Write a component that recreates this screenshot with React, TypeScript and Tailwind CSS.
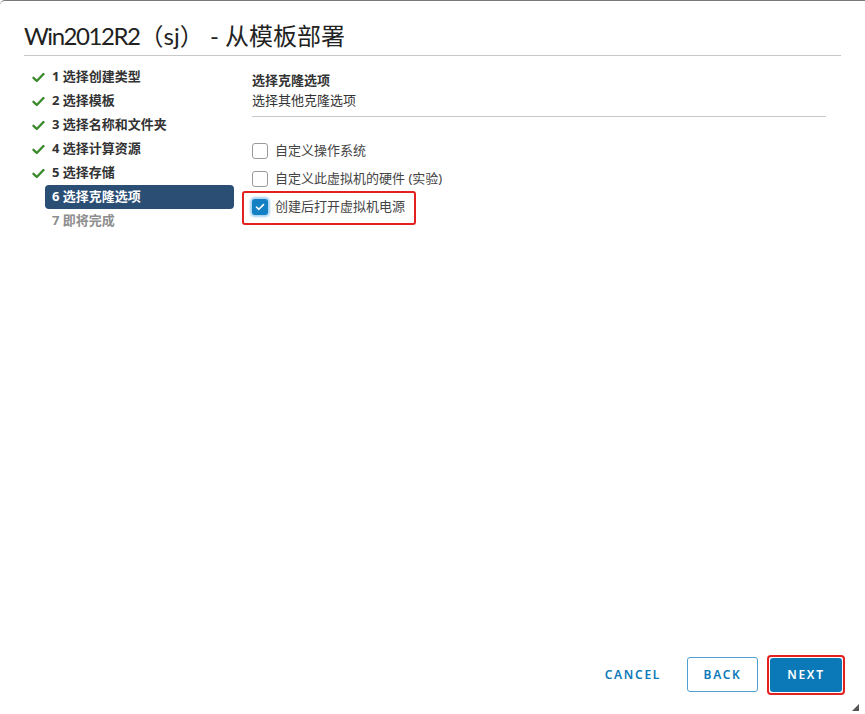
import React, { useState } from 'react';

const FONT = '"Noto Sans", "Noto Sans CJK SC", sans-serif';

const steps = [
  { n: 1, label: '选择创建类型', state: 'done' },
  { n: 2, label: '选择模板', state: 'done' },
  { n: 3, label: '选择名称和文件夹', state: 'done' },
  { n: 4, label: '选择计算资源', state: 'done' },
  { n: 5, label: '选择存储', state: 'done' },
  { n: 6, label: '选择克隆选项', state: 'active' },
  { n: 7, label: '即将完成', state: 'todo' },
];

function GreenCheck() {
  return (
    <svg width="13" height="11" viewBox="0 0 13 11">
      <path d="M1.5 5.8 L4.8 9 L11.5 2" fill="none" stroke="#3d8b2f" strokeWidth="2.4" strokeLinecap="round" strokeLinejoin="round" />
    </svg>
  );
}

function Box({ checked, onClick }: { checked: boolean; onClick: () => void }) {
  return (
    <button
      onClick={onClick}
      className={`w-4 h-4 rounded-[3px] flex items-center justify-center shrink-0 ${checked ? 'bg-[#1380c4] shadow-[0_0_2px_2px_rgba(96,175,232,0.55)]' : 'border border-[#9a9a9a] bg-white'}`}
    >
      {checked && (
        <svg width="10" height="8" viewBox="0 0 10 8">
          <path d="M1.5 4.2 L3.9 6.3 L8.5 1.6" fill="none" stroke="#fff" strokeWidth="1.6" strokeLinecap="round" strokeLinejoin="round" />
        </svg>
      )}
    </button>
  );
}

export default function App() {
  const [opts, setOpts] = useState([false, false, true]);
  const labels = ['自定义操作系统', '自定义此虚拟机的硬件 (实验)', '创建后打开虚拟机电源'];
  const toggle = (i: number) => setOpts(o => o.map((v, j) => (j === i ? !v : v)));

  return (
    <div className="relative w-[865px] h-[714px] bg-white border-t border-[#7a7a7a] rounded-tl-[5px] flex flex-col overflow-hidden" style={{ fontFamily: FONT }}>
      <div className="mx-[24px] pt-[19px] pb-[3px] border-b border-[#c8c8c8]">
        <h1 className="text-[24px] leading-[32px] text-[#222] font-normal font-['Lato','Noto_Sans_CJK_SC',sans-serif]">
          <span className="tracking-[-0.06em]">Win2012R2</span>（sj） - 从模板部署
        </h1>
      </div>

      <div className="flex flex-1">
        <div className="w-[234px] pt-[9px] shrink-0">
          {steps.map(s => (
            <div key={s.n} className="flex items-center h-6">
              <div className="w-[45px] pl-[32px] flex items-center">{s.state === 'done' && <GreenCheck />}</div>
              <div className={`flex-1 h-6 flex items-center pl-[7px] rounded-[4px] text-[13px] font-bold ${s.state === 'active' ? 'bg-[#2b4e74] text-white' : s.state === 'todo' ? 'text-[#8e8e8e]' : 'text-[#333]'}`}>
                {s.n} {s.label}
              </div>
            </div>
          ))}
        </div>

        <div className="ml-[18px] mr-[39px] flex-1 pt-[14px]">
          <div className="pb-[6px] border-b border-[#c8c8c8]">
            <div className="text-[13px] leading-5 font-bold text-[#333]">选择克隆选项</div>
            <div className="text-[13px] leading-5 text-[#333]">选择其他克隆选项</div>
          </div>
          <div className="mt-[20px]">
            {labels.map((l, i) => (
              <div key={l} className="relative h-7 flex items-center gap-[7px]">
                <Box checked={opts[i]} onClick={() => toggle(i)} />
                <span className="text-[13px] text-[#444]">{l}</span>
                {i === 2 && <span className="absolute left-[-10px] top-[-2px] w-[174px] h-[34px] border-2 border-[#e42121] rounded-[3px] pointer-events-none" />}
              </div>
            ))}
          </div>
        </div>
      </div>

      <div className="flex justify-end items-center gap-3 pr-[23px] pb-[22px]">
        <button className="h-[35px] px-3 mr-[2px] text-[12px] font-semibold tracking-[0.14em] text-[#0b79b8]">CANCEL</button>
        <button className="h-[35px] w-[71px] border border-[#4f9fd0] rounded-[3px] text-[12px] font-semibold tracking-[0.14em] text-[#0b79b8]">BACK</button>
        <div className="relative">
          <button className="h-[34px] w-[72px] bg-[#0b79b8] rounded-[3px] text-[12px] font-semibold tracking-[0.14em] text-white">NEXT</button>
          <span className="absolute -inset-[3px] border-2 border-[#e42121] rounded-[4px] pointer-events-none" />
        </div>
      </div>

      <svg className="absolute right-[6px] bottom-[3px]" width="7" height="7" viewBox="0 0 7 7">
        <path d="M7 0 L7 7 L0 7 Z" fill="#555" />
      </svg>
    </div>
  );
}
